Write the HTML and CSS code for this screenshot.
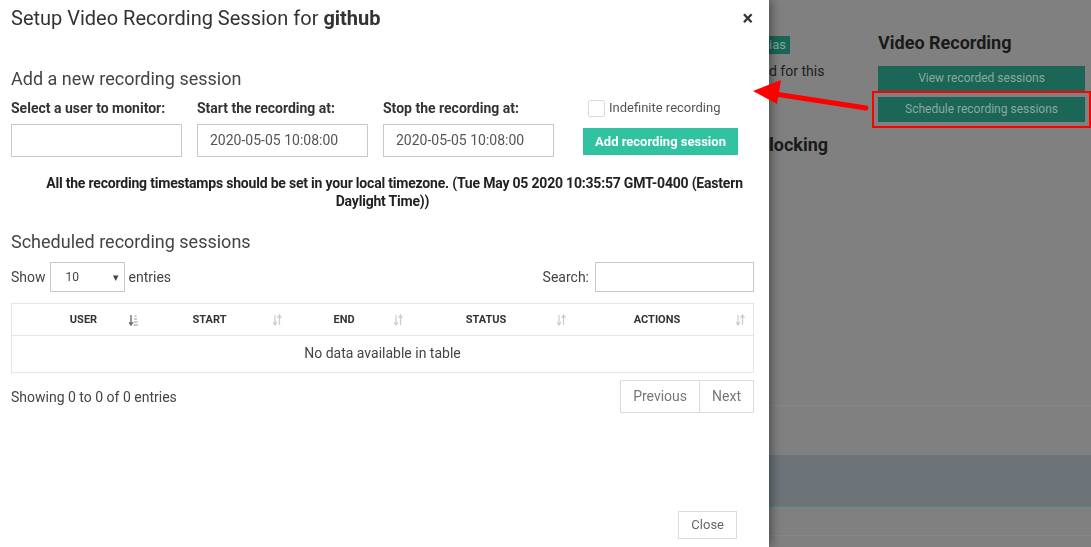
FILE: index.html
```html
<!DOCTYPE html>
<html>
<head>
<meta charset="utf-8">
<link rel="stylesheet" href="styles.css">
</head>
<body>
<div class="page">
  <div class="page-left">
    <span class="badge">ias</span>
    <p class="muted-text">d for this</p>
    <h3 class="page-h">locking</h3>
  </div>
  <div class="page-right">
    <h3 class="page-h">Video Recording</h3>
    <div class="dim-btn">View recorded sessions</div>
    <div class="dim-btn highlighted">Schedule recording sessions</div>
  </div>
  <div class="page-rule rule-1"></div>
  <div class="page-band"></div>
  <div class="page-rule rule-2"></div>
  <svg class="annot-arrow" width="130" height="40" viewBox="0 0 130 40">
    <line x1="113" y1="31" x2="22" y2="17" stroke="#ff0000" stroke-width="5" stroke-linecap="round"/>
    <polygon points="0,14 28,3 24,27" fill="#ff0000"/>
  </svg>
</div>

<div class="modal">
  <div class="modal-header">
    <h2 class="modal-title">Setup Video Recording Session for <b>github</b></h2>
    <span class="close-x">×</span>
  </div>

  <h3 class="section-title first">Add a new recording session</h3>
  <div class="form-row">
    <div class="field">
      <label class="field-label">Select a user to monitor:</label>
      <div class="input"></div>
    </div>
    <div class="field">
      <label class="field-label">Start the recording at:</label>
      <div class="input">2020-05-05 10:08:00</div>
    </div>
    <div class="field">
      <label class="field-label">Stop the recording at:</label>
      <div class="input">2020-05-05 10:08:00</div>
    </div>
    <div class="field action-field">
      <label class="check-row"><span class="checkbox"></span>Indefinite recording</label>
      <div class="add-btn">Add recording session</div>
    </div>
  </div>

  <p class="note">All the recording timestamps should be set in your local timezone. (Tue May 05 2020 10:35:57 GMT-0400 (Eastern Daylight Time))</p>

  <h3 class="section-title">Scheduled recording sessions</h3>

  <div class="dt-controls">
    <div class="dt-length">Show <span class="select"><span>10</span><span class="caret">▾</span></span> entries</div>
    <div class="dt-search">Search: <span class="search-input"></span></div>
  </div>

  <div class="dt-table">
    <div class="dt-head">
      <div class="th c1"><span class="th-text">USER</span>
        <svg class="sort" width="9" height="12" viewBox="0 0 9 12"><path d="M2 1v9M0 8l2 3 2-3" stroke="#666" stroke-width="1.3" fill="none"/><path d="M5.5 2h2M5 5h3M5 8h3.5M4.5 11h4.5" stroke="#bbb" stroke-width="1.3"/></svg>
      </div>
      <div class="th c2"><span class="th-text">START</span>
        <svg class="sort" width="9" height="12" viewBox="0 0 9 12"><path d="M2 1v9M0 8l2 3 2-3M6.5 11V2M4.5 4l2-3 2 3" stroke="#ccc" stroke-width="1.2" fill="none"/></svg>
      </div>
      <div class="th c3"><span class="th-text">END</span>
        <svg class="sort" width="9" height="12" viewBox="0 0 9 12"><path d="M2 1v9M0 8l2 3 2-3M6.5 11V2M4.5 4l2-3 2 3" stroke="#ccc" stroke-width="1.2" fill="none"/></svg>
      </div>
      <div class="th c4"><span class="th-text">STATUS</span>
        <svg class="sort" width="9" height="12" viewBox="0 0 9 12"><path d="M2 1v9M0 8l2 3 2-3M6.5 11V2M4.5 4l2-3 2 3" stroke="#ccc" stroke-width="1.2" fill="none"/></svg>
      </div>
      <div class="th c5"><span class="th-text">ACTIONS</span>
        <svg class="sort" width="9" height="12" viewBox="0 0 9 12"><path d="M2 1v9M0 8l2 3 2-3M6.5 11V2M4.5 4l2-3 2 3" stroke="#ccc" stroke-width="1.2" fill="none"/></svg>
      </div>
    </div>
    <div class="dt-empty">No data available in table</div>
  </div>

  <div class="dt-footer">
    <div class="dt-info">Showing 0 to 0 of 0 entries</div>
    <div class="pager"><span class="pg">Previous</span><span class="pg">Next</span></div>
  </div>

  <div class="modal-footer">
    <span class="close-btn">Close</span>
  </div>
</div>
</body>
</html>
```

FILE: styles.css
```css
* { box-sizing: border-box; }
html, body { margin: 0; height: 100%; }
body {
  background: #808080;
  font-family: Roboto, "Noto Sans", Arial, sans-serif;
  color: #333;
  overflow: hidden;
}

/* background page (dimmed) */
.page {
  position: relative;
  height: 547px;
  display: grid;
  grid-template-columns: 769px 109px 1fr;
  grid-template-rows: auto;
}
.page-left {
  grid-column: 2;
  padding-top: 34px;
  overflow: hidden;
}
.badge {
  display: inline-block;
  background: #1a6656;
  color: #7fa89e;
  font-size: 13px;
  line-height: 18px;
  padding: 0 4px 0 0;
}
.muted-text {
  margin: 8px 0 0 0;
  font-size: 14px;
  color: #1e1e1e;
  line-height: 18px;
}
.page-left .page-h { margin-top: 53px; }
.page-h {
  margin: 0;
  font-size: 18px;
  font-weight: 700;
  color: #1a1a1a;
  line-height: 24px;
}
.page-right {
  grid-column: 3;
  padding: 31px 6px 0 0;
}
.dim-btn {
  background: #1b6656;
  color: #8aa9a0;
  font-size: 12px;
  line-height: 25px;
  text-align: center;
}
.page-right .page-h { margin-bottom: 11px; }
.dim-btn + .dim-btn { margin-top: 6px; }
.highlighted {
  outline: 2px solid #ff0000;
  outline-offset: 4px;
}
.page-rule {
  position: absolute;
  left: 769px;
  right: 0;
  height: 1px;
  background: #868686;
}
.rule-1 { top: 405px; }
.rule-2 { top: 535px; }
.page-band {
  position: absolute;
  left: 769px;
  right: 0;
  top: 455px;
  height: 52px;
  background: #6c747a;
  border-bottom: 1px solid #4f8a80;
}
.annot-arrow {
  position: absolute;
  left: 753px;
  top: 77px;
  z-index: 5;
}

/* modal */
.modal {
  position: fixed;
  left: 0;
  top: 0;
  width: 769px;
  height: 547px;
  background: #fff;
  box-shadow: 2px 0 10px rgba(0, 0, 0, 0.45);
  padding: 0 15px 0 11px;
  z-index: 2;
}
.modal-header {
  display: flex;
  justify-content: space-between;
  align-items: center;
  padding-top: 6px;
}
.modal-title {
  margin: 0;
  font-size: 20px;
  font-weight: 400;
  line-height: 24px;
  color: #333;
}
.modal-title b { font-weight: 700; }
.close-x {
  font-size: 20px;
  font-weight: 700;
  line-height: 20px;
  color: #333;
  margin-right: 1px;
}
.section-title {
  margin: 0;
  font-size: 18px;
  font-weight: 400;
  line-height: 24px;
  color: #444;
}
.section-title.first { margin-top: 37px; }

.form-row {
  display: grid;
  grid-template-columns: 171px 171px 171px 169px;
  column-gap: 15px;
  margin-top: 7px;
}
.field { display: flex; flex-direction: column; }
.field-label {
  font-size: 14px;
  font-weight: 700;
  line-height: 20px;
  color: #333;
}
.input {
  margin-top: 6px;
  height: 33px;
  border: 1px solid #c8c8c8;
  padding: 0 12px;
  font-size: 14px;
  line-height: 31px;
  color: #555;
}
.action-field { margin-left: 14px; }
.check-row {
  display: flex;
  align-items: center;
  gap: 4px;
  font-size: 13px;
  color: #555;
  line-height: 20px;
  padding-left: 5px;
  white-space: nowrap;
}
.checkbox {
  width: 17px;
  height: 17px;
  border: 1px solid #d6dadd;
  border-radius: 2px;
}
.add-btn {
  margin-top: 10px;
  width: 155px;
  height: 27px;
  background: #30c2a1;
  color: #fff;
  font-size: 13px;
  font-weight: 700;
  line-height: 27px;
  text-align: center;
}

.note {
  margin: 17px 0 0 0;
  font-size: 14px;
  font-weight: 700;
  line-height: 18px;
  text-align: center;
  color: #222;
  letter-spacing: -0.2px;
  padding: 0 6px;
  text-indent: 24px;
}
.note + .section-title { margin-top: 20px; }

.dt-controls {
  display: flex;
  justify-content: space-between;
  align-items: center;
  margin-top: 8px;
  font-size: 14px;
  color: #444;
}
.dt-length, .dt-search { display: flex; align-items: center; }
.select {
  display: inline-flex;
  justify-content: space-between;
  align-items: center;
  width: 75px;
  height: 30px;
  margin: 0 4px 0 4px;
  padding: 0 5px 0 15px;
  border: 1px solid #c8c8c8;
  font-size: 12px;
  color: #444;
}
.caret { font-size: 11px; color: #444; }
.search-input {
  display: inline-block;
  width: 159px;
  height: 30px;
  margin-left: 6px;
  border: 1px solid #c8c8c8;
}

.dt-table {
  margin-top: 11px;
  border: 1px solid #e2e6e8;
}
.dt-head {
  display: grid;
  grid-template-columns: 130px 148px 121px 163px 1fr;
  border-bottom: 1px solid #e2e6e8;
  height: 32px;
}
.th {
  display: flex;
  align-items: center;
  padding: 0 8px 0 4px;
}
.th.c1 { padding-left: 26px; padding-right: 4px; }
.th-text {
  flex: 1;
  text-align: center;
  font-size: 11px;
  font-weight: 700;
  color: #333;
}
.sort { flex: none; }
.dt-empty {
  height: 36px;
  line-height: 35px;
  text-align: center;
  font-size: 14px;
  color: #444;
}

.dt-footer {
  display: flex;
  justify-content: space-between;
  align-items: center;
  margin-top: 7px;
}
.dt-info { font-size: 14px; color: #444; }
.pager { display: flex; }
.pg {
  height: 33px;
  line-height: 31px;
  padding: 0 12px;
  border: 1px solid #dcdcdc;
  font-size: 14px;
  color: #777;
}
.pg + .pg { border-left: 0; }

.modal-footer {
  position: absolute;
  right: 32px;
  bottom: 8px;
}
.close-btn {
  display: inline-block;
  height: 28px;
  line-height: 26px;
  padding: 0 12px;
  border: 1px solid #dcdcdc;
  font-size: 13px;
  color: #666;
}
```
